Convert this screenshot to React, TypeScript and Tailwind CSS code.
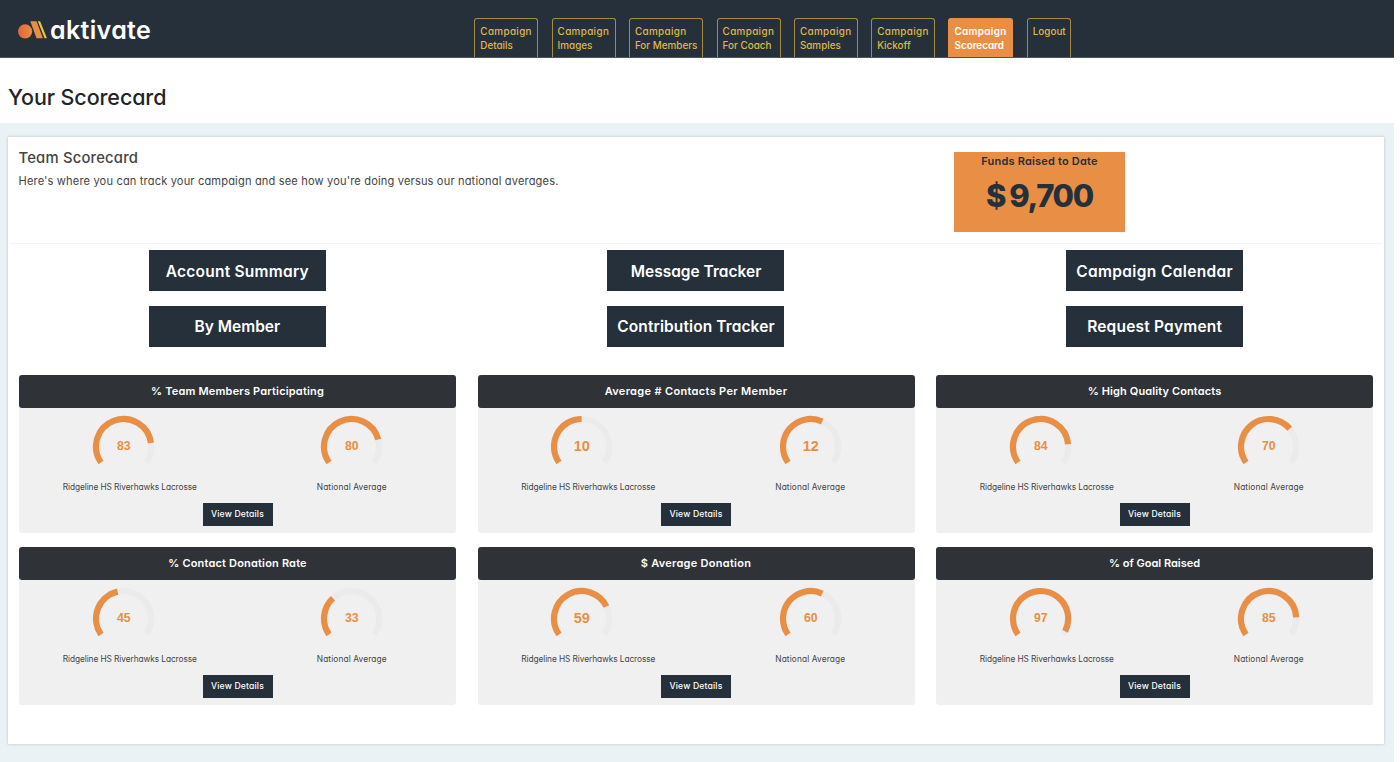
const tabs = [
  { top: 'Campaign', bottom: 'Details', box: 'w-[64px]' },
  { top: 'Campaign', bottom: 'Images', box: 'w-[64px]' },
  { top: 'Campaign', bottom: 'For Members', box: 'w-[74.4px]' },
  { top: 'Campaign', bottom: 'For Coach', box: 'w-[64px]' },
  { top: 'Campaign', bottom: 'Samples', box: 'w-[64px]' },
  { top: 'Campaign', bottom: 'Kickoff', box: 'w-[64px]' },
  { top: 'Campaign', bottom: 'Scorecard', box: 'w-[65px]', active: true },
  { top: '', bottom: 'Logout', box: 'w-[44.5px]' },
]

const actions = [
  { label: 'Account Summary', tracking: 'tracking-[0.24px]' },
  { label: 'Message Tracker', tracking: 'tracking-normal' },
  { label: 'Campaign Calendar', tracking: 'tracking-[0.36px]' },
  { label: 'By Member', tracking: 'tracking-normal' },
  { label: 'Contribution Tracker', tracking: 'tracking-[0.1px]' },
  { label: 'Request Payment', tracking: 'tracking-[0.2px]' },
]

type GaugeData = { value: number; share: number; large?: boolean }

type PanelData = {
  title: string
  tracking: string
  team: GaugeData
  national: GaugeData
}

const TEAM = 'Ridgeline HS Riverhawks Lacrosse'

const panels: PanelData[] = [
  {
    title: '% Team Members Participating',
    tracking: 'tracking-[0.18px]',
    team: { value: 83, share: 0.83 },
    national: { value: 80, share: 0.8 },
  },
  {
    title: 'Average # Contacts Per Member',
    tracking: 'tracking-[0.33px]',
    team: { value: 10, share: 0.5, large: true },
    national: { value: 12, share: 0.6, large: true },
  },
  {
    title: '% High Quality Contacts',
    tracking: 'tracking-[0.12px]',
    team: { value: 84, share: 0.84 },
    national: { value: 70, share: 0.7 },
  },
  {
    title: '% Contact Donation Rate',
    tracking: 'tracking-[0.18px]',
    team: { value: 45, share: 0.45 },
    national: { value: 33, share: 0.33 },
  },
  {
    title: '$ Average Donation',
    tracking: 'tracking-[0.28px]',
    team: { value: 59, share: 0.756, large: true },
    national: { value: 60, share: 0.6 },
  },
  {
    title: '% of Goal Raised',
    tracking: 'tracking-normal',
    team: { value: 97, share: 0.97 },
    national: { value: 85, share: 0.85 },
  },
]

const SWEEP = 250
const RADIUS = 27.6
const CENTER_X = 31.6
const CENTER_Y = 31.6

// point on the dial, degrees clockwise from the left end of the arc
function dialPoint(deg: number) {
  const rad = ((270 - SWEEP / 2 + deg) * Math.PI) / 180
  return `${(CENTER_X + RADIUS * Math.cos(rad)).toFixed(2)} ${(CENTER_Y + RADIUS * Math.sin(rad)).toFixed(2)}`
}

function arc(share: number) {
  const deg = share * SWEEP
  return `M ${dialPoint(0)} A ${RADIUS} ${RADIUS} 0 ${deg > 180 ? 1 : 0} 1 ${dialPoint(deg)}`
}

function Gauge({ data }: { data: GaugeData }) {
  return (
    <svg width="63" height="62" viewBox="0 0 63 62" fill="none">
      <path d={arc(1)} stroke="#ebebeb" strokeWidth="6.2" />
      <path d={arc(data.share)} stroke="#e88f45" strokeWidth="6.2" />
      <text
        x="31.8"
        y={data.large ? 36.3 : 35.4}
        textAnchor="middle"
        fill="#e88f45"
        className={
          data.large
            ? "font-['Liberation_Sans',sans-serif] text-[14.5px] font-bold"
            : "font-['Liberation_Sans',sans-serif] text-[12.3px] font-bold"
        }
      >
        {data.value}
      </text>
    </svg>
  )
}

function Logo() {
  return (
    <div className="flex items-center">
      <svg width="32" height="20" viewBox="0 0 32 20">
        <defs>
          <linearGradient id="ball" x1="0" y1="0" x2="1" y2="0">
            <stop offset="0" stopColor="#e5643c" />
            <stop offset="1" stopColor="#e88f45" />
          </linearGradient>
        </defs>
        <path d="M12.3 1.3h6.2l6.4 17h-6.4z" fill="#e88f45" />
        <path d="M19.8 1.3h2.3l6.8 17h-2.3z" fill="#edc64b" />
        <circle cx="7.1" cy="11.4" r="7.1" fill="url(#ball)" />
      </svg>
      <span className="text-[25px] leading-5 font-semibold tracking-[0.35px] text-white">aktivate</span>
    </div>
  )
}

function Panel({ title, tracking, team, national }: PanelData) {
  return (
    <section className="h-[158px] rounded-[3px] bg-[#f0f0f0]">
      <h3
        className={`${tracking} flex h-[33px] items-center justify-center rounded-[3px] bg-[#2f3237] text-[11px] font-semibold text-white`}
      >
        {title}
      </h3>
      <div className="-mx-[10px] mt-[7px] grid grid-cols-2">
        <div className="flex flex-col items-center">
          <Gauge data={team} />
          <p className="mt-[4px] ml-[13px] text-[8.3px] leading-3 tracking-[-0.07px] whitespace-nowrap text-[#444]">
            {TEAM}
          </p>
        </div>
        <div className="flex flex-col items-center">
          <Gauge data={national} />
          <p className="mt-[4px] text-[8.3px] leading-3 tracking-[0.13px] whitespace-nowrap text-[#444]">
            National Average
          </p>
        </div>
      </div>
      <div className="mt-[10px] flex justify-center">
        <button className="h-[23px] w-[70px] bg-[#25303b] text-[8.6px] font-medium tracking-[0.17px] whitespace-nowrap text-white">
          View Details
        </button>
      </div>
    </section>
  )
}

export default function App() {
  return (
    <div className="h-[762px] w-[1400px] overflow-hidden bg-white font-['Inter',sans-serif] [font-feature-settings:'cv11']">
      <div className="flex h-full w-[1394px] flex-col bg-[#eaf2f6]">
        {/* Top bar */}
        <header className="flex h-[58px] shrink-0 border-b border-[#4a5663] bg-[#25303b]">
          <div className="w-[474.3px] pt-5 pl-[18px]">
            <Logo />
          </div>
          <nav className="flex gap-[13.3px] pt-[18px]">
            {tabs.map((tab) => (
              <a
                key={tab.bottom}
                className={`${tab.box} flex shrink-0 flex-col rounded-t-[3px] border border-b-0 pt-[6px] pl-[5px] text-[9.9px] leading-[13.6px] whitespace-nowrap ${
                  tab.active
                    ? 'border-[#e88f45] bg-[#e88f45] font-semibold text-white'
                    : 'border-[#a58c45] font-medium text-[#dfb94c]'
                }`}
              >
                {tab.top && <span className="tracking-[0.34px]">{tab.top}</span>}
                <span>{tab.bottom}</span>
              </a>
            ))}
          </nav>
        </header>

        {/* Page title */}
        <div className="flex h-[65px] shrink-0 items-center bg-white pt-[13px] pl-[8px]">
          <h1 className="text-[21.5px] font-medium tracking-[-0.1px] text-[#222527]">Your Scorecard</h1>
        </div>

        {/* Scorecard */}
        <main className="mt-[14px] ml-2 h-[607px] w-[1376px] shrink-0 bg-white shadow-[0_0_3px_rgba(0,0,0,0.2)]">
          <div className="mx-[2px] flex h-[107px] border-b border-[#f3f4f5]">
            <div className="w-[944px] pt-[11px] pl-[8.5px] text-[#444]">
              <h2 className="text-[14.8px] leading-5 font-medium tracking-[0.2px]">Team Scorecard</h2>
              <p className="mt-[3px] text-[11.1px] leading-5 tracking-[0.15px]">
                Here's where you can track your campaign and see how you're doing versus our national averages.
              </p>
            </div>
            <div className="mt-[15px] h-[80px] w-[171px] bg-[#e88f45] text-center text-[#25303b]">
              <p className="pt-px text-[11px] leading-4 font-semibold tracking-[0.2px]">Funds Raised to Date</p>
              <p className="mt-[7px] text-[31px] leading-10 font-extrabold tracking-[-1.3px]">
                <span className="mr-[4px]">$</span>9,700
              </p>
            </div>
          </div>

          <div className="mt-[6.4px] grid grid-cols-3 gap-y-[14.3px]">
            {actions.map(({ label, tracking }) => (
              <button
                key={label}
                className={`${tracking} mx-auto h-[41px] w-[177px] bg-[#25303b] pt-px text-[15.5px] font-semibold whitespace-nowrap text-white`}
              >
                {label}
              </button>
            ))}
          </div>

          <div className="mt-[28.3px] grid grid-cols-3 gap-x-[21.5px] gap-y-[14px] px-[11px]">
            {panels.map((panel) => (
              <Panel key={panel.title} {...panel} />
            ))}
          </div>
        </main>
      </div>
    </div>
  )
}
